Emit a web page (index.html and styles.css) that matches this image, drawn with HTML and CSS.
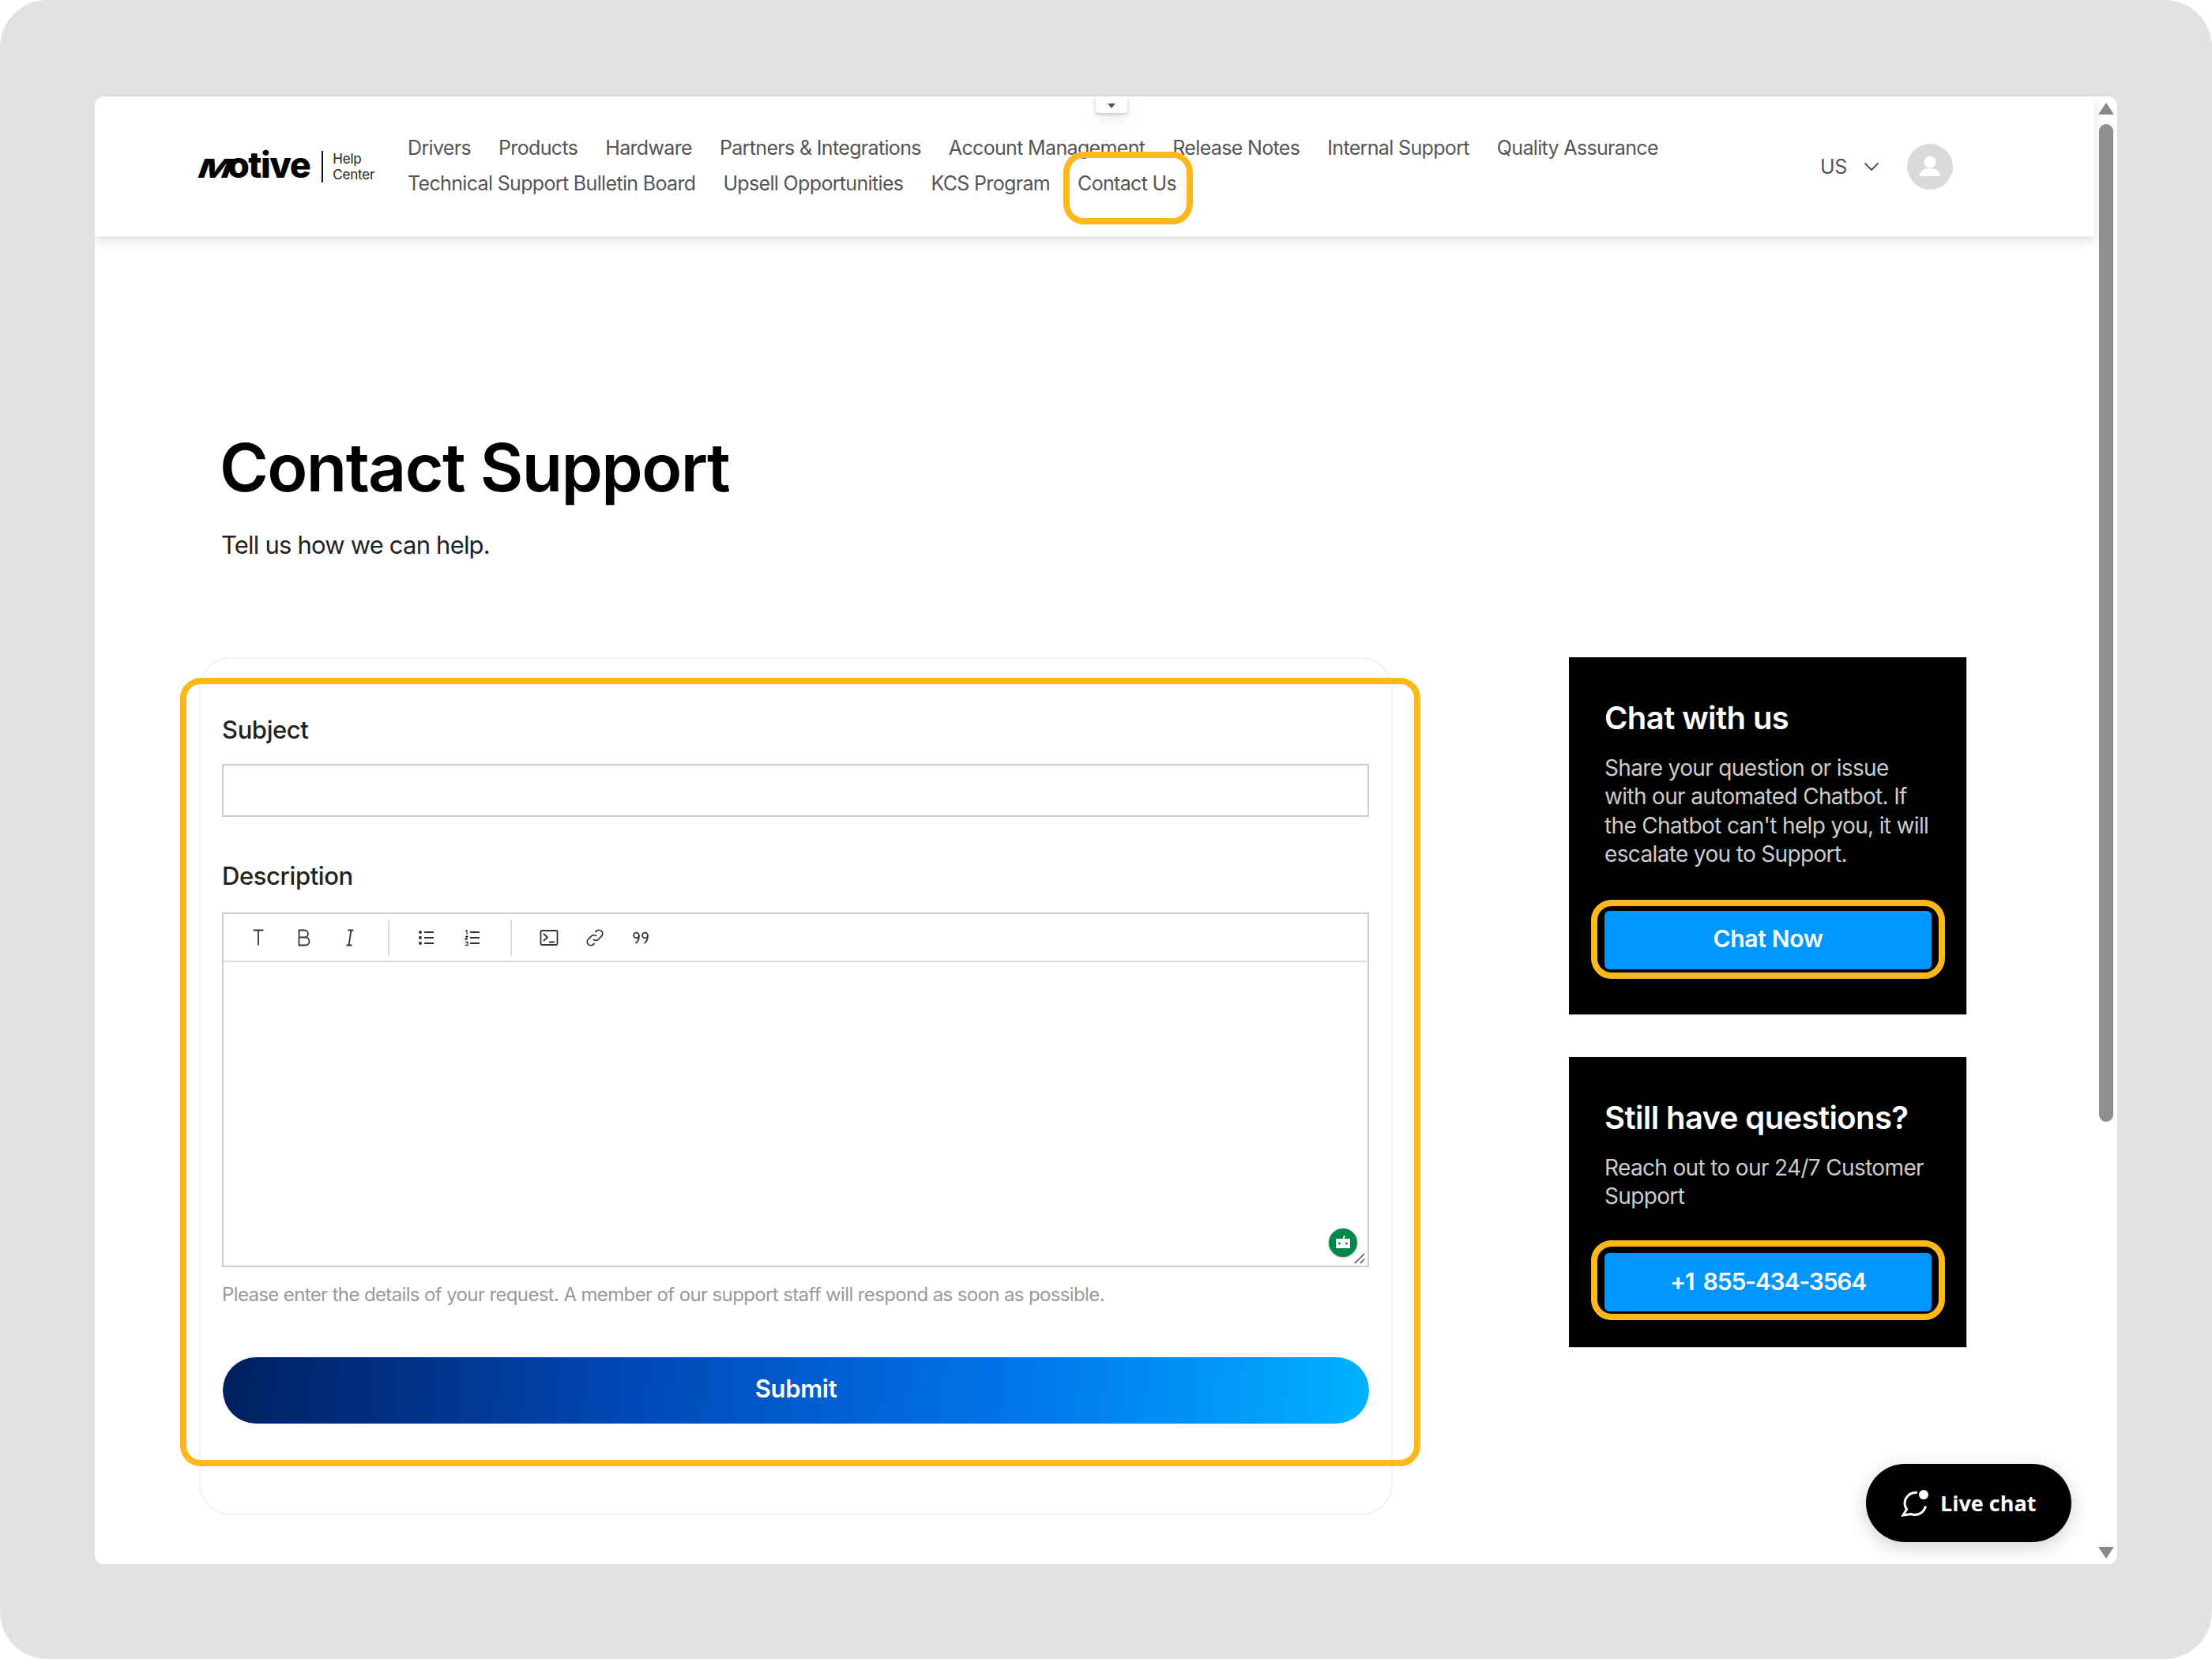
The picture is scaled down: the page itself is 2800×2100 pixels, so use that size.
FILE: index.html
```html
<!DOCTYPE html>
<html lang="en">
<head>
<meta charset="utf-8">
<title>Contact Support</title>
<link rel="stylesheet" href="styles.css">
</head>
<body>
<div class="frame">
  <div class="window">
    <div class="page">
      <header class="header">
        <a class="logo"><span class="logo-word"><span class="logo-m">M</span>otive</span><span class="logo-sub">Help<br>Center</span></a>
        <nav class="nav">
          <a>Drivers</a><a>Products</a><a>Hardware</a><a>Partners &amp; Integrations</a><a>Account Management</a><a>Release Notes</a><a>Internal Support</a><a>Quality Assurance</a>
          <a>Technical Support Bulletin Board</a><a>Upsell Opportunities</a><a>KCS Program</a><a class="nav-marked">Contact Us<span class="mark mark-nav"></span></a>
        </nav>
        <div class="header-right">
          <span class="locale">US</span>
          <svg class="chevron" viewBox="0 0 20 12"><path d="M1.500 1.500 10 10l8.500-8.500"/></svg>
          <span class="avatar"><svg viewBox="0 0 58 58"><circle cx="29" cy="23" r="7.500"/><path d="M16 41c0-7 6-10 13-10s13 3 13 10z"/></svg></span>
        </div>
        <span class="notch"></span>
      </header>
      <main class="main">
        <h1 class="title">Contact Support</h1>
        <p class="subtitle">Tell us how we can help.</p>
        <div class="columns">
          <form class="form-card">
            <span class="mark mark-form"></span>
            <label class="label">Subject</label>
            <div class="input"></div>
            <label class="label label-desc">Description</label>
            <div class="editor">
              <div class="toolbar">
                <div class="tool-group">
                  <svg class="tool" viewBox="0 0 24 24"><path d="M5.500 2.500h13M12 2.500v19"/></svg>
                  <svg class="tool" viewBox="0 0 24 24"><path d="M5.500 2.500h7a4.500 4.500 0 0 1 0 9h-7zM5.500 11.500h8a5 5 0 0 1 0 10h-8z"/></svg>
                  <svg class="tool" viewBox="0 0 24 24"><path d="M9.500 2.500h7M7.500 21.500h7M13.500 2.500l-3 19"/></svg>
                </div>
                <div class="tool-group">
                  <svg class="tool" viewBox="0 0 24 24"><path d="M9 5h12M9 12h12M9 19h12"/><circle class="dot" cx="4" cy="5" r="2"/><circle class="dot" cx="4" cy="12" r="2"/><circle class="dot" cx="4" cy="19" r="2"/></svg>
                  <svg class="tool" viewBox="0 0 24 24"><path d="M9 5h12M9 12h12M9 19h12"/><path class="thin" d="M3 3h2v5M3 10.500h3l-3 3.500h3M3 17.500h3v4H3"/></svg>
                </div>
                <div class="tool-group tool-group-last">
                  <svg class="tool" viewBox="0 0 24 24"><rect x="1.500" y="3" width="21" height="18" rx="1.500"/><path d="m5 7 5 4.500L5 16M12 17.500h7"/></svg>
                  <svg class="tool" viewBox="0 0 24 24"><path d="M10 14a4.500 4.500 0 0 0 6.500 0l4-4A4.600 4.600 0 0 0 14 3.500l-1.500 1.500"/><path d="M14 10a4.500 4.500 0 0 0-6.500 0l-4 4a4.600 4.600 0 0 0 6.500 6.500l1.500-1.500"/></svg>
                  <svg class="tool" viewBox="0 0 24 24"><circle cx="6.500" cy="9" r="3.400"/><circle cx="17.500" cy="9" r="3.400"/><path d="M9.900 9c0 5.500-1.500 8.500-4.400 10M20.900 9c0 5.500-1.500 8.500-4.400 10"/></svg>
                </div>
              </div>
              <div class="editor-body">
                <span class="bot"><svg viewBox="0 0 36 36"><path class="bot-ant" d="m18.500 13 1.500-4"/><path class="bot-head" fill-rule="evenodd" d="M9 13h18v12H9zM13.500 17.500a1.500 1.500 0 1 0 0 3 1.500 1.500 0 0 0 0-3zM22.500 17.500a1.500 1.500 0 1 0 0 3 1.500 1.500 0 0 0 0-3z"/></svg></span>
                <svg class="resize" viewBox="0 0 16 16"><path d="M1 15 15 1M9 15l6-6"/></svg>
              </div>
            </div>
            <p class="hint">Please enter the details of your request. A member of our support staff will respond as soon as possible.</p>
            <button type="button" class="submit">Submit</button>
          </form>
          <aside class="side">
            <section class="side-card side-card-chat">
              <h2 class="side-title">Chat with us</h2>
              <p class="side-text">Share your question or issue with our automated Chatbot. If the Chatbot can't help you, it will escalate you to Support.</p>
              <a class="side-btn">Chat Now<span class="mark mark-btn"></span></a>
            </section>
            <section class="side-card side-card-phone">
              <h2 class="side-title">Still have questions?</h2>
              <p class="side-text">Reach out to our 24/7 Customer Support</p>
              <a class="side-btn side-btn-phone">+1 855-434-3564<span class="mark mark-btn mark-btn-low"></span></a>
            </section>
          </aside>
        </div>
      </main>
    </div>
    <div class="scrollbar">
      <span class="arrow arrow-up"></span>
      <span class="thumb"></span>
      <span class="arrow arrow-down"></span>
    </div>
    <a class="live-chat">
      <svg viewBox="0 0 36 36"><path d="M21 4.500A14 14 0 0 0 5 18c0 3 1 5.500 2.500 7.500L3 33l10-1.500c2 .8 3.500 1 5 1a14 14 0 0 0 13.500-11"/><circle class="live-dot" cx="29" cy="7" r="6"/></svg>
      <span>Live chat</span>
    </a>
  </div>
</div>
</body>
</html>
```
FILE: styles.css
```css
* { box-sizing: border-box; }
html, body { margin: 0; padding: 0; background: #fff; }
body { font-family: "Inter", "Liberation Sans", sans-serif; width: 2800px; height: 2100px; overflow: hidden; }
a { color: inherit; text-decoration: none; }
h1, h2, p { margin: 0; }

.frame { width: 2800px; height: 2100px; background: #e2e2e2; border-radius: 60px; padding: 122px 120px 120px; }
.window { position: relative; height: 1858px; display: flex; background: #fff; border-radius: 12px; box-shadow: 0 -2px 0 #dcdcdc; overflow: hidden; }
.page { width: 2531px; flex: none; display: flex; flex-direction: column; }

.mark { position: absolute; border: 8px solid #ffb81c; border-radius: 26px; pointer-events: none; z-index: 3; }

.header { position: relative; height: 177px; flex: none; display: flex; align-items: center; padding: 0 179px 0 130px; background: #fff; box-shadow: 0 6px 12px rgba(0,0,0,.12); z-index: 2; }
.logo { display: flex; align-items: center; width: 266px; flex: none; }
.logo-word { font-weight: 800; font-size: 45px; letter-spacing: -1.500px; color: #000; line-height: 46px; padding-right: 15px; }
.logo-m { display: inline-block; width: 44px; margin-left: -6px; transform: skewX(-20deg) scaleX(1.350); transform-origin: left bottom; font-size: 33px; letter-spacing: 0; }
.logo-sub { font-size: 17px; line-height: 20px; letter-spacing: -.2px; color: #222; border-left: 2px solid #111; padding-left: 12px; }
.nav { width: 1650px; display: flex; flex-wrap: wrap; column-gap: 35px; font-size: 25px; line-height: 45px; letter-spacing: -.66px; color: #555; margin-top: -1px; }
.nav-marked { position: relative; }
.mark-nav { left: -18px; right: -21px; top: -18px; bottom: -29px; }
.header-right { margin-left: auto; display: flex; align-items: center; }
.locale { font-size: 25px; letter-spacing: -.3px; color: #555; }
.chevron { width: 20px; height: 12px; margin-left: 21px; fill: none; stroke: #555; stroke-width: 2; }
.avatar { width: 58px; height: 58px; margin-left: 35px; border-radius: 50%; background: #d9d9d9; display: block; }
.avatar svg { display: block; width: 58px; height: 58px; fill: #fff; }
.notch { position: absolute; left: 1267px; top: 0; width: 40px; height: 21px; background: #fff; border-radius: 0 0 4px 4px; box-shadow: 0 2px 4px rgba(0,0,0,.2), 0 10px 20px rgba(100,120,140,.12); }
.notch::after { content: ""; position: absolute; left: 15px; top: 9px; border-style: solid; border-width: 6px 5px 0; border-color: #555 transparent transparent; }

.main { flex: 1; padding: 243px 0 0 160px; background: #fff; }
.title { margin-left: -2px; font-size: 84px; line-height: 100px; font-weight: 600; color: #000; letter-spacing: -1.600px; }
.subtitle { margin-top: 28px; font-size: 31px; line-height: 40px; letter-spacing: -.8px; color: #222; }
.columns { margin: 122px 0 0 -28px; display: flex; gap: 223px; align-items: flex-start; }

.form-card { position: relative; width: 1511px; height: 1086px; flex: none; padding: 70px 28px 0 27px; border: 2px solid #f2f2f2; border-radius: 40px; background: #fff; }
.mark-form { left: -26px; right: -37px; top: 24px; bottom: 60px; }
.label { display: block; font-size: 31px; line-height: 40px; font-weight: 500; letter-spacing: -.4px; color: #222; }
.input { margin-top: 23px; height: 67px; border: 2px solid #ccc; }
.label-desc { margin-top: 55px; }
.editor { margin-top: 26px; height: 449px; border: 2px solid #ccc; display: flex; flex-direction: column; }
.toolbar { height: 61px; flex: none; display: flex; align-items: center; border-bottom: 2px solid #ddd; padding-left: 32px; }
.tool-group { display: flex; gap: 34px; padding-right: 36px; margin-right: 35px; height: 46px; align-items: center; border-right: 2px solid #ddd; }
.tool-group-last { border-right: 0; }
.tool { width: 24px; height: 24px; fill: none; stroke: #333; stroke-width: 1.800; }
.tool .dot { fill: #333; stroke: none; }
.tool .thin { stroke-width: 1.300; }
.editor-body { position: relative; flex: 1; }
.bot { position: absolute; right: 13px; bottom: 11px; width: 36px; height: 36px; border-radius: 50%; background: #00884a; box-shadow: 0 1px 3px rgba(0,0,0,.25); }
.bot svg { display: block; width: 36px; height: 36px; }
.bot-head { fill: #fff; }
.bot-ant { stroke: #fff; stroke-width: 2; fill: none; }
.resize { position: absolute; right: 3px; bottom: 2px; width: 14px; height: 14px; fill: none; stroke: #666; stroke-width: 2; }
.hint { margin-top: 17px; font-size: 24px; line-height: 36px; letter-spacing: -.63px; color: #999; }
.submit { display: block; width: calc(100% - 1px); height: 84px; margin: 61px 0 0 1px; padding: 0 0 5px; border: 0; border-radius: 42px; background: linear-gradient(95deg, #00205f 0%, #0047b5 35%, #0076ec 70%, #00b2ff 100%); color: #fff; font-family: inherit; font-size: 31px; font-weight: 600; letter-spacing: -.3px; }

.side { width: 504px; flex: none; display: flex; flex-direction: column; gap: 53px; }
.side-card { background: #000; color: #fff; padding: 53px 44px 0 45px; border-right: 1px solid #ccc; border-bottom: 1px solid #ccc; }
.side-card-chat { height: 453px; }
.side-card-phone { height: 368px; }
.side-title { font-size: 40px; line-height: 48px; font-weight: 600; letter-spacing: -.6px; }
.side-text { margin-top: 21px; font-size: 28px; line-height: 36.400px; letter-spacing: -.65px; color: #ccc; }
.side-btn { position: relative; display: flex; align-items: center; justify-content: center; height: 74px; margin-top: 53px; padding-bottom: 4px; background: #0096ff; border-radius: 6px; font-size: 30px; font-weight: 600; letter-spacing: -.3px; color: #fff; }
.side-btn-phone { padding-bottom: 1px; letter-spacing: -1.200px; word-spacing: 5px; }
.mark-btn { left: -17px; right: -17px; top: -14px; bottom: -12px; }
.mark-btn-low { top: -16px; bottom: -11px; }

.scrollbar { flex: 1; position: relative; display: flex; flex-direction: column; align-items: center; padding-top: 8px; background: #fff; }
.arrow { width: 0; height: 0; border-style: solid; border-color: transparent; }
.arrow-up { border-width: 0 10px 15px; border-bottom-color: #8a8a8a; }
.thumb { width: 18px; height: 1263px; margin-top: 12px; background: #909090; border-radius: 9px; }
.arrow-down { position: absolute; bottom: 7px; border-width: 15px 10px 0; border-top-color: #8a8a8a; }

.live-chat { position: absolute; left: 2242px; top: 1731px; width: 260px; height: 99px; display: flex; align-items: center; gap: 14px; padding-left: 44px; border-radius: 50px; background: #000; color: #fff; font-family: "Open Sans", sans-serif; font-weight: 700; font-size: 27px; box-shadow: 0 6px 24px rgba(0,0,0,.18); z-index: 4; }
.live-chat svg { width: 36px; height: 36px; flex: none; fill: none; stroke: #fff; stroke-width: 3; }
.live-chat .live-dot { fill: #fff; stroke: none; }
```
